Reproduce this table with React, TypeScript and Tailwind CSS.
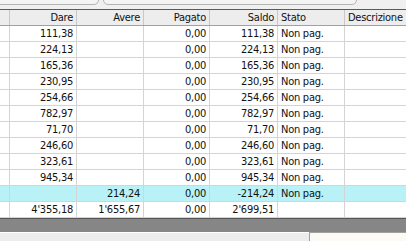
const rows: [string, string, string, string, string, boolean][] = [
  ["111,38", "", "0,00", "111,38", "Non pag.", false],
  ["224,13", "", "0,00", "224,13", "Non pag.", false],
  ["165,36", "", "0,00", "165,36", "Non pag.", false],
  ["230,95", "", "0,00", "230,95", "Non pag.", false],
  ["254,66", "", "0,00", "254,66", "Non pag.", false],
  ["782,97", "", "0,00", "782,97", "Non pag.", false],
  ["71,70", "", "0,00", "71,70", "Non pag.", false],
  ["246,60", "", "0,00", "246,60", "Non pag.", false],
  ["323,61", "", "0,00", "323,61", "Non pag.", false],
  ["945,34", "", "0,00", "945,34", "Non pag.", false],
  ["", "214,24", "0,00", "-214,24", "Non pag.", true],
  ["4'355,18", "1'655,67", "0,00", "2'699,51", "", false],
];

const cols = "grid grid-cols-[10px_67px_67px_66px_68px_67px_1fr]";

export default function App() {
  return (
    <div className="h-[241px] w-[406px] overflow-hidden bg-[#f0f0f0] text-[11px] leading-[15px] tracking-[-0.25px] text-[#111] [font-family:'DejaVu_Sans_Condensed','Liberation_Sans',Tahoma,sans-serif]">
      {/* toolbar bottoms */}
      <div className="flex h-[9px] gap-[4px]">
        <div className="-ml-2 -mt-2 h-[13px] w-[107px] rounded-b-[5px] border border-[#b4b4b4] bg-[#f4f4f4]" />
        <div className="-mt-2 h-[13px] w-[254px] rounded-b-[5px] border border-[#b4b4b4] bg-[#f4f4f4]" />
      </div>

      <div className="border-t border-[#5a5a5a] bg-white">
        <div className={`${cols} h-[16px] border-b border-[#a0a0a0] bg-[#ededed]`}>
          <div className="border-r border-[#c8c8c8]" />
          <div className="border-r border-[#c8c8c8] pr-[3px] text-right">Dare</div>
          <div className="border-r border-[#c8c8c8] pr-[3px] text-right">Avere</div>
          <div className="border-r border-[#c8c8c8] pr-[3px] text-right">Pagato</div>
          <div className="border-r border-[#c8c8c8] pr-[3px] text-right">Saldo</div>
          <div className="border-r border-[#c8c8c8] pl-[3px]">Stato</div>
          <div className="pl-[3px]">Descrizione</div>
        </div>
        {rows.map(([dare, avere, pagato, saldo, stato, hi], i) => (
          <div key={i} className={`${cols} h-[16px] border-b border-[#d4d4d4] ${hi ? "bg-[#b8f2f6]" : "bg-white"}`}>
            <div className="border-r border-[#d4d4d4]" />
            <div className="border-r border-[#d4d4d4] pr-[3px] text-right">{dare}</div>
            <div className="border-r border-[#d4d4d4] pr-[3px] text-right">{avere}</div>
            <div className="border-r border-[#d4d4d4] pr-[3px] text-right">{pagato}</div>
            <div className="border-r border-[#d4d4d4] pr-[3px] text-right">{saldo}</div>
            <div className="border-r border-[#d4d4d4] pl-[3px]">{stato}</div>
            <div />
          </div>
        ))}
      </div>

      <div className="h-[14px] border-t border-[#555] bg-[#868686]" />

      <div className="flex h-[9px]">
        <div className="w-[309px] border-t border-white bg-[#ececec]" />
        <div className="flex-1 border-l border-t border-[#a0a0a0] bg-[#fcfaf4]" />
      </div>
    </div>
  );
}
